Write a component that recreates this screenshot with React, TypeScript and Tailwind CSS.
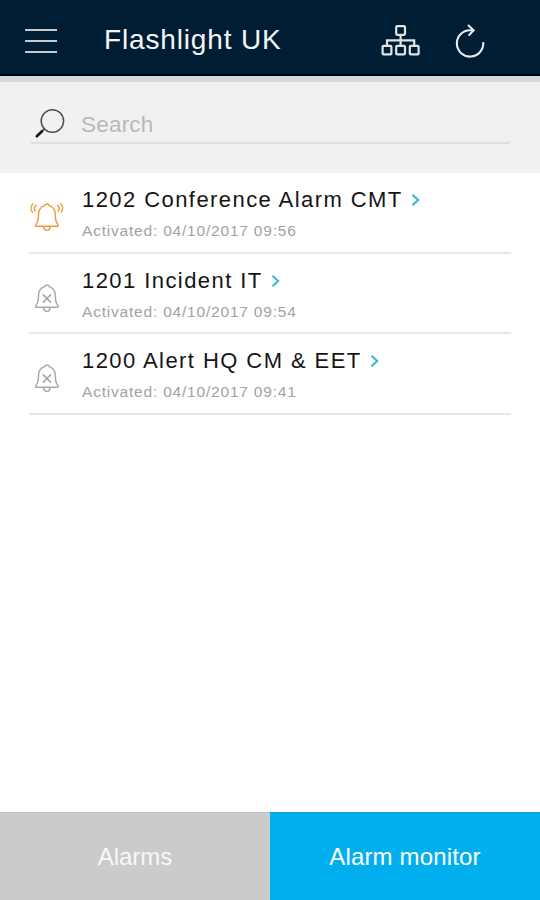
import React from 'react';

interface Alarm {
  id: number;
  name: string;
  activated: string;
  active: boolean;
}

const alarms: Alarm[] = [
  { id: 1202, name: 'Conference Alarm CMT', activated: '04/10/2017 09:56', active: true },
  { id: 1201, name: 'Incident IT', activated: '04/10/2017 09:54', active: false },
  { id: 1200, name: 'Alert HQ CM & EET', activated: '04/10/2017 09:41', active: false },
];

const SitemapIcon = () => (
  <svg width="40" height="34" viewBox="0 0 40 34" fill="none" stroke="#e1e5e4" strokeWidth="2.2">
    <rect x="16.2" y="3.2" width="8.8" height="8.6" rx="1" />
    <rect x="2.6" y="22.8" width="8.8" height="8.6" rx="1" />
    <rect x="16.2" y="22.8" width="8.8" height="8.6" rx="1" />
    <rect x="29.8" y="22.8" width="8.8" height="8.6" rx="1" />
    <path d="M20.6 12v11M7 23v-5.7h27.2V23" />
  </svg>
);

const RefreshIcon = () => (
  <svg width="34" height="36" viewBox="0 0 34 36" fill="none" stroke="#e9ecec" strokeWidth="2.1">
    <path d="M30.2 19.2A13.2 13.2 0 1 1 17 7.2H20" />
    <path d="M15 2L20.6 7.2L15.6 12.6" />
  </svg>
);

const SearchIcon = () => (
  <svg width="32" height="32" viewBox="0 0 32 32" fill="none">
    <circle cx="18.4" cy="13" r="11.2" stroke="#46525a" strokeWidth="1.5" />
    <path d="M10.5 20.8L7.6 23.8" stroke="#36434b" strokeWidth="1.5" />
    <path d="M8 23.2L2.8 28.3" stroke="#10161a" strokeWidth="2.6" strokeLinecap="round" />
  </svg>
);

const BellIcon = ({ active }: { active: boolean }) => (
  <svg width="36" height="34" viewBox="0 0 36 34" fill="none" stroke={active ? '#eb9a3c' : '#a8a8a8'} strokeWidth="1.5" strokeLinejoin="round">
    <path d="M15.6 4.6C16 2.4 19.8 2.4 20.2 4.6C24 5.9 26 9 26.2 12.5L26.6 18C26.8 20.5 27.6 22 29 23.8V25.2H6.8V23.8C8.2 22 9 20.5 9.2 18L9.6 12.5C9.8 9 11.8 5.9 15.6 4.6Z" />
    <path d="M14.8 25.5C15 30.6 20.8 30.6 21 25.5" />
    {active ? (
      <path d="M4 2.8C1.6 5 1.4 8.6 3.4 11.2M7 4.4C5.1 5.8 4.8 8 6.2 10.2M31.6 2.8C34 5 34.2 8.6 32.2 11.2M28.6 4.4C30.5 5.8 30.8 8 29.4 10.2" strokeLinecap="round" />
    ) : (
      <path d="M13.8 12.4L22 20.6M22 12.4L13.8 20.6" />
    )}
  </svg>
);

const AlarmRow = ({ alarm }: { alarm: Alarm }) => (
  <li className="flex h-[80.6px] border-b-2 border-[#e5e8eb]">
    <div className="w-[53px] pt-[28px]">
      <BellIcon active={alarm.active} />
    </div>
    <div className="pt-[13px] whitespace-nowrap">
      <div className="flex items-center">
        <h2 className="text-[22px] leading-[27px] tracking-[1.43px] text-[#151515]">
          {alarm.id} {alarm.name}
        </h2>
        <svg className="ml-2 mt-px" width="10" height="14" viewBox="0 0 10 14" fill="none" stroke="#35b5d3" strokeWidth="2">
          <path d="M1.5 1.7L7.2 7L1.5 12.3" />
        </svg>
      </div>
      <p className="mt-[8px] text-[15.5px] leading-[20px] tracking-[0.8px] text-[#a2a2a2]">
        Activated: {alarm.activated}
      </p>
    </div>
  </li>
);

export default function App() {
  return (
    <div className="flex h-[900px] w-[540px] flex-col overflow-hidden bg-white font-['Liberation_Sans',Arial,sans-serif]">
      {/* Header */}
      <header className="flex h-[76px] shrink-0 items-start border-b-2 border-black bg-[#001d33]">
        <button className="ml-[25px] mt-[29px] flex w-8 flex-col gap-[9px]">
          <span className="h-[2px] w-full bg-[#c8c9c9]" />
          <span className="h-[2px] w-full bg-[#c8c9c9]" />
          <span className="h-[2px] w-full bg-[#c8c9c9]" />
        </button>
        <h1 className="ml-[47px] mt-[23px] text-[28px] leading-[34px] tracking-[0.85px] text-[#f4f6f6]">Flashlight UK</h1>
        <div className="ml-auto mr-[53px] flex items-start gap-[33px] pt-[23px]">
          <SitemapIcon />
          <RefreshIcon />
        </div>
      </header>

      {/* Search */}
      <div className="h-[97px] shrink-0 border-t-[6px] border-[#d4d8df] bg-[#f1f1f1] px-[29px] pt-[26px]">
        <div className="flex h-[36px] items-start rounded-sm border-b-2 border-[#dcdddd] pl-[5px]">
          <SearchIcon />
          <span className="ml-[15px] mt-[3px] text-[22.5px] leading-[28px] tracking-[0.2px] text-[#b8b8b8]">Search</span>
        </div>
      </div>

      {/* Alarm list */}
      <ul className="flex-1 px-[29px]">
        {alarms.map((alarm) => (
          <AlarmRow key={alarm.id} alarm={alarm} />
        ))}
      </ul>

      {/* Tabs */}
      <nav className="grid h-[88px] shrink-0 grid-cols-2 text-[24px] text-white">
        <button className="border-t border-[#bfbfbf] bg-[#cbcbcb] text-[#f8f8f8]">Alarms</button>
        <button className="border-t border-[#0a9fd6] bg-[#02afee] tracking-[0.15px]">Alarm monitor</button>
      </nav>
    </div>
  );
}
